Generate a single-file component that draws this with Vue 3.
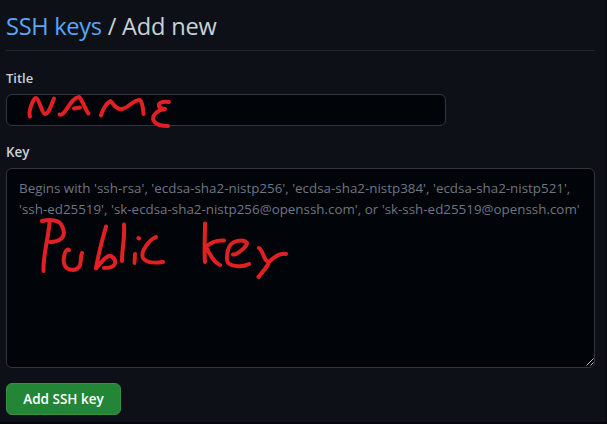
<script setup>
const hints = [
  "Begins with 'ssh-rsa', 'ecdsa-sha2-nistp256', 'ecdsa-sha2-nistp384', 'ecdsa-sha2-nistp521',",
  "'ssh-ed25519', 'sk-ecdsa-sha2-nistp256@openssh.com', or 'sk-ssh-ed25519@openssh.com'",
]
</script>

<template>
  <main class="page">
    <h1 class="heading"><a class="link">SSH keys</a> <span class="rest">/ Add new</span></h1>
    <form class="form">
      <label class="label">Title</label>
      <div class="field title-field">
        <svg class="ink name-ink" width="160" height="40" viewBox="20 90 160 40">
          <path d="M30 116.500C28 112 33 98 36 98C39 98 42 114 45 114C49 114 51 105 54 98.500" />
          <path d="M59.500 114.500C65 117 70 98 79 97C82 99 85 109 88.500 113.500M74 108.500L80 107.500" />
          <path d="M101 115.500C103 109 107 103 110.500 101C113 103 115 109 121 109C128 109 132 100 140 100C143 103 143 110 143.500 114" />
          <path d="M169 102C162 101 158 103 159 106C160 109 163 109 165 109C157 110 151 116 154 121C157 126 163 126 168 126" />
        </svg>
      </div>
      <label class="label key-label">Key</label>
      <div class="field key-field">
        <p v-for="(hint, i) in hints" :key="i" class="hint">{{ hint }}</p>
        <svg class="ink key-ink" width="260" height="64" viewBox="35 216 260 64">
          <path d="M42 221C50 219 60 220 62 226C68 238 58 242 50 242M49.500 223C48 240 43 255 43.500 271" />
          <path d="M69 250C65 247 62 261 65 266C68 271 76 271 79 267C82 263 80 257 82 253" />
          <path d="M106 226.500C102 241 98 255 96 268.500C99 265 107 254 111 256C117 260 118 268 104 268" />
          <path d="M124 224.500C125 239 122 247 122 261M135 254L134.500 263M138.500 238L139 238.500M156 237C149 240 140 252 143 258C146 263 156 263 163 262" />
          <path d="M205 223.500C205 238 204 251 205 262M224 240.500C216 240 211 242 206 247C210 254 213 262 220 265" />
          <path d="M233 254.500C238 255 247 246 247 243C244 239 231 239 228 250C225 263 228 265 236 266C241 267 245 266 249 264" />
          <path d="M259 248C263 250 264 262 269 262C274 257 280 253 286 254M269 262C267 268 263 271 258.500 277" />
        </svg>
        <svg class="grip" width="8" height="8" viewBox="0 0 8 8"><path d="M.5 7.500L7.500.5M4.500 7.500L7.500 4.500" /></svg>
      </div>
      <button type="button" class="submit"><span>Add SSH key</span></button>
    </form>
  </main>
</template>

<style>
body { background: #0d1117; }
</style>

<style scoped>
.page {
  box-sizing: border-box;
  width: 607px;
  height: 424px;
  padding: 8px 11px 0 6px;
  overflow: hidden;
  background: #0d1117;
  border-right: 1px solid #05070b;
  border-bottom: 2px solid #05050a;
  color: #c9d1d9;
  font-family: "Open Sans", "Noto Sans", sans-serif;
}
.heading {
  box-sizing: border-box;
  height: 43px;
  margin: 0;
  border-bottom: 1px solid #21262d;
  font-size: 23.6px;
  font-weight: 400;
  line-height: 36px;
  letter-spacing: -.2px;
  white-space: nowrap;
}
.link { color: #58a6ff; letter-spacing: -.3px; }
.form { display: flex; flex-direction: column; align-items: flex-start; }
.label {
  height: 21px;
  margin: 17px 0 5px;
  font-size: 13px;
  font-weight: 600;
  line-height: 21px;
}
.key-label { margin-top: 16px; font-size: 13.4px; }
.field {
  position: relative;
  box-sizing: border-box;
  background: #010409;
  border: 1px solid #30363d;
  border-radius: 6px;
}
.title-field { width: 440px; height: 32px; }
.key-field { width: 589px; height: 200px; padding: 9px 12px; }
.hint {
  margin: 0;
  height: 21px;
  color: #6e7681;
  font-size: 13.38px;
  line-height: 21px;
  white-space: nowrap;
}
.ink {
  position: absolute;
  fill: none;
  stroke: #e12023;
  stroke-width: 4;
  stroke-linecap: round;
  stroke-linejoin: round;
}
.name-ink { left: 13px; top: -5px; }
.key-ink { left: 28px; top: 47px; }
.grip { position: absolute; right: 0; bottom: 1px; fill: none; stroke: #b4b7ba; stroke-width: 1; }
.submit {
  width: 115px;
  height: 32px;
  margin-top: 15px;
  padding: 0;
  border: 1px solid #36923f;
  border-radius: 6px;
  background: #238636;
  color: #fff;
  font: 600 13.5px/30px "Open Sans", "Noto Sans", sans-serif;
  white-space: nowrap;
}
</style>
